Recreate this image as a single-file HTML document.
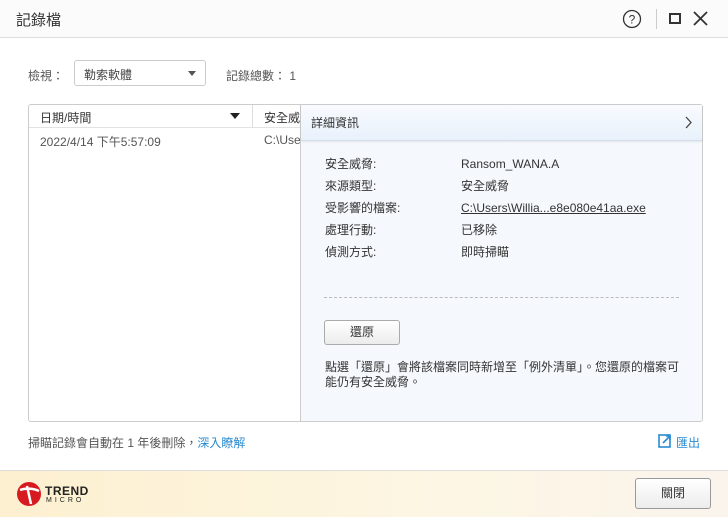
<!DOCTYPE html>
<html><head><meta charset="utf-8"><style>
*{margin:0;padding:0;box-sizing:border-box}
body{width:728px;height:517px;overflow:hidden;background:#fff;font-family:"Liberation Sans","Noto Sans CJK TC",sans-serif;font-size:12px;color:#333;position:relative}
.a{position:absolute}
</style></head><body>
<div class="a" style="left:0;top:0;width:728px;height:38px;background:#fbfbfb;border-bottom:1px solid #ddd"></div>
<div class="a" style="left:16px;top:9px;font-size:15px;color:#333">記錄檔</div>
<svg class="a" style="left:622px;top:9px" width="20" height="20"><circle cx="10" cy="10" r="8.5" fill="none" stroke="#333" stroke-width="1.3"/><text x="10" y="14.5" text-anchor="middle" font-size="12" font-family="Liberation Sans" fill="#333">?</text></svg>
<div class="a" style="left:656px;top:9px;width:1px;height:20px;background:#ccc"></div>
<div class="a" style="left:669px;top:13px;width:12px;height:11px;border:2px solid #333"></div>
<svg class="a" style="left:693px;top:11px" width="15" height="15"><path d="M1 1L14 14M14 1L1 14" stroke="#333" stroke-width="1.8"/></svg>

<div class="a" style="left:28px;top:67px;color:#555">檢視：</div>
<div class="a" style="left:74px;top:60px;width:132px;height:26px;border:1px solid #ccc;border-radius:3px;background:#fff"></div>
<div class="a" style="left:84px;top:66px;color:#444">勒索軟體</div>
<div class="a" style="left:188px;top:71px;width:0;height:0;border-left:4px solid transparent;border-right:4px solid transparent;border-top:5px solid #555"></div>
<div class="a" style="left:226px;top:67px;color:#555">記錄總數： 1</div>

<div class="a" style="left:28px;top:104px;width:675px;height:318px;border:1px solid #ccc;border-radius:3px;background:#fff"></div>
<div class="a" style="left:29px;top:127px;width:272px;height:1px;background:#e2e2e2"></div>
<div class="a" style="left:252px;top:105px;width:1px;height:22px;background:#ddd"></div>
<div class="a" style="left:40px;top:109px;color:#333">日期/時間</div>
<div class="a" style="left:230px;top:113px;border-left:5px solid transparent;border-right:5px solid transparent;border-top:6px solid #222"></div>
<div class="a" style="left:264px;top:109px">安全威</div>
<div class="a" style="left:40px;top:133px;color:#555">2022/4/14 下午5:57:09</div>
<div class="a" style="left:264px;top:133px;color:#555">C:\User</div>

<div class="a" style="left:300px;top:105px;width:402px;height:316px;background:#f5f9fd;border-left:1px solid #ccc;border-radius:0 0 3px 0"></div>
<div class="a" style="left:301px;top:105px;width:401px;height:36px;background:linear-gradient(#f8fbff,#e8f1fb);border-bottom:1px solid #d5dde6;box-shadow:0 1px 2px rgba(0,0,0,.08)"></div>
<div class="a" style="left:311px;top:114px;color:#333">詳細資訊</div>
<svg class="a" style="left:685px;top:116px" width="8" height="13"><path d="M1 1L6 6.5L1 12" stroke="#444" stroke-width="1.3" fill="none"/></svg>

<div class="a" style="left:325px;top:153px;line-height:22px;color:#333">安全威脅:<br>來源類型:<br>受影響的檔案:<br>處理行動:<br>偵測方式:</div>
<div class="a" style="left:461px;top:153px;line-height:22px;color:#333">Ransom_WANA.A<br>安全威脅<br><u>C:\Users\Willia...e8e080e41aa.exe</u><br>已移除<br>即時掃瞄</div>
<div class="a" style="left:324px;top:297px;width:355px;border-top:1px dashed #bbb"></div>
<div class="a" style="left:324px;top:320px;width:76px;height:25px;border:1px solid #aaa;border-radius:3px;background:linear-gradient(#fff,#ececec);text-align:center;line-height:23px">還原</div>
<div class="a" style="left:325px;top:360px;width:360px;line-height:15px;color:#333">點選「還原」會將該檔案同時新增至「例外清單」。您還原的檔案可能仍有安全威脅。</div>

<div class="a" style="left:28px;top:434px;color:#555">掃瞄記錄會自動在 1 年後刪除，<span style="color:#2a8bd0">深入瞭解</span></div>
<svg class="a" style="left:658px;top:434px" width="14" height="14"><rect x="1" y="1" width="11" height="12" fill="none" stroke="#2a8bd0" stroke-width="1.6"/><path d="M5 9L12 2M8 2H12V6" stroke="#2a8bd0" stroke-width="1.6" fill="none"/></svg>
<div class="a" style="left:676px;top:434px;color:#2a8bd0">匯出</div>

<div class="a" style="left:0;top:470px;width:728px;height:47px;background:linear-gradient(90deg,#fdf0d0,#fdf6e4 60%,#faf4ec);border-top:1px solid #ddd"></div>
<svg class="a" style="left:15px;top:480px" width="28" height="28"><circle cx="14" cy="14" r="12" fill="#d71920"/><path d="M5 10C10 8 18 8 24 11M12 6L16 24" stroke="#fff" stroke-width="2.5" fill="none"/></svg>
<div class="a" style="left:45px;top:484px;font-weight:bold;font-size:12px;color:#222;letter-spacing:0.5px">TREND</div>
<div class="a" style="left:46px;top:497px;font-size:7px;color:#222;letter-spacing:3px">MICRO</div>
<div class="a" style="left:635px;top:478px;width:76px;height:31px;border:1px solid #999;border-radius:3px;background:linear-gradient(#fff,#ececec);text-align:center;line-height:29px;color:#333">關閉</div>
</body></html>
